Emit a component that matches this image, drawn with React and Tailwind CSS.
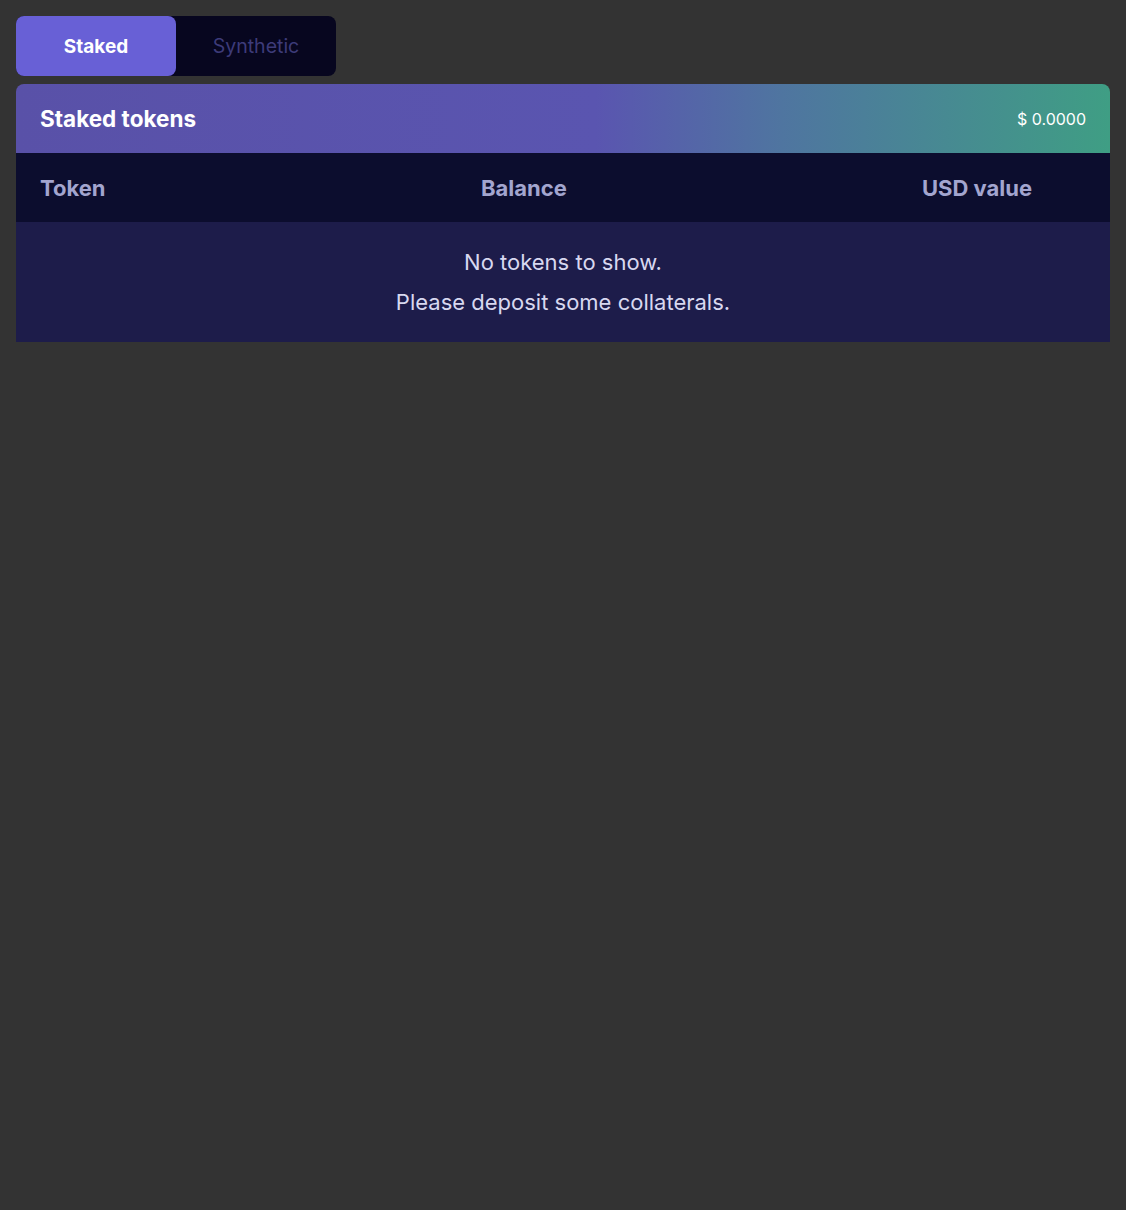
import React, { useState } from 'react';

const font = { fontFamily: 'Inter, "Noto Sans", sans-serif' };

export default function App() {
  const [tab, setTab] = useState('staked');

  return (
    <div className="min-h-[1210px] bg-[#333333] p-4" style={font}>
      {/* Tabs */}
      <div className="flex w-[320px] rounded-lg bg-[#07061f]">
        <button
          onClick={() => setTab('staked')}
          className={`h-[60px] w-[160px] rounded-lg pt-[2px] ${
            tab === 'staked' ? 'bg-[#6860d6] text-[19px] font-bold text-white' : 'text-[19.5px] text-[#3d3b79]'
          }`}
        >
          Staked
        </button>
        <button
          onClick={() => setTab('synthetic')}
          className={`h-[60px] w-[160px] rounded-lg pt-[2px] ${
            tab === 'synthetic' ? 'bg-[#6860d6] text-[19px] font-bold text-white' : 'text-[19.5px] text-[#3d3b79]'
          }`}
        >
          Synthetic
        </button>
      </div>

      {/* Card */}
      <div className="mt-2 overflow-hidden rounded-t-lg">
        <div className="flex h-[69px] items-center justify-between bg-[linear-gradient(90deg,#5951a8_0%,#5a55b0_53%,#4f75a0_70%,#3f9e84_100%)] px-6 pt-[1px]">
          <h2 className="text-[22.5px] font-bold text-white">Staked tokens</h2>
          <span className="text-[16px] text-white">$ 0.0000</span>
        </div>

        <div className="grid h-[69px] grid-cols-[441px_441px_1fr] items-center bg-[#0c0d2e] pt-[2px] text-[22px] font-bold text-[#a3a5cf]">
          <div className="px-6">Token</div>
          <div className="px-6">Balance</div>
          <div className="px-6">USD value</div>
        </div>

        <div className="flex h-[120px] flex-col items-center justify-center gap-[7px] bg-[#1d1c4a] text-[22px] text-[#d8d8f0]">
          <p>No tokens to show.</p>
          <p>Please deposit some collaterals.</p>
        </div>
      </div>
    </div>
  );
}
